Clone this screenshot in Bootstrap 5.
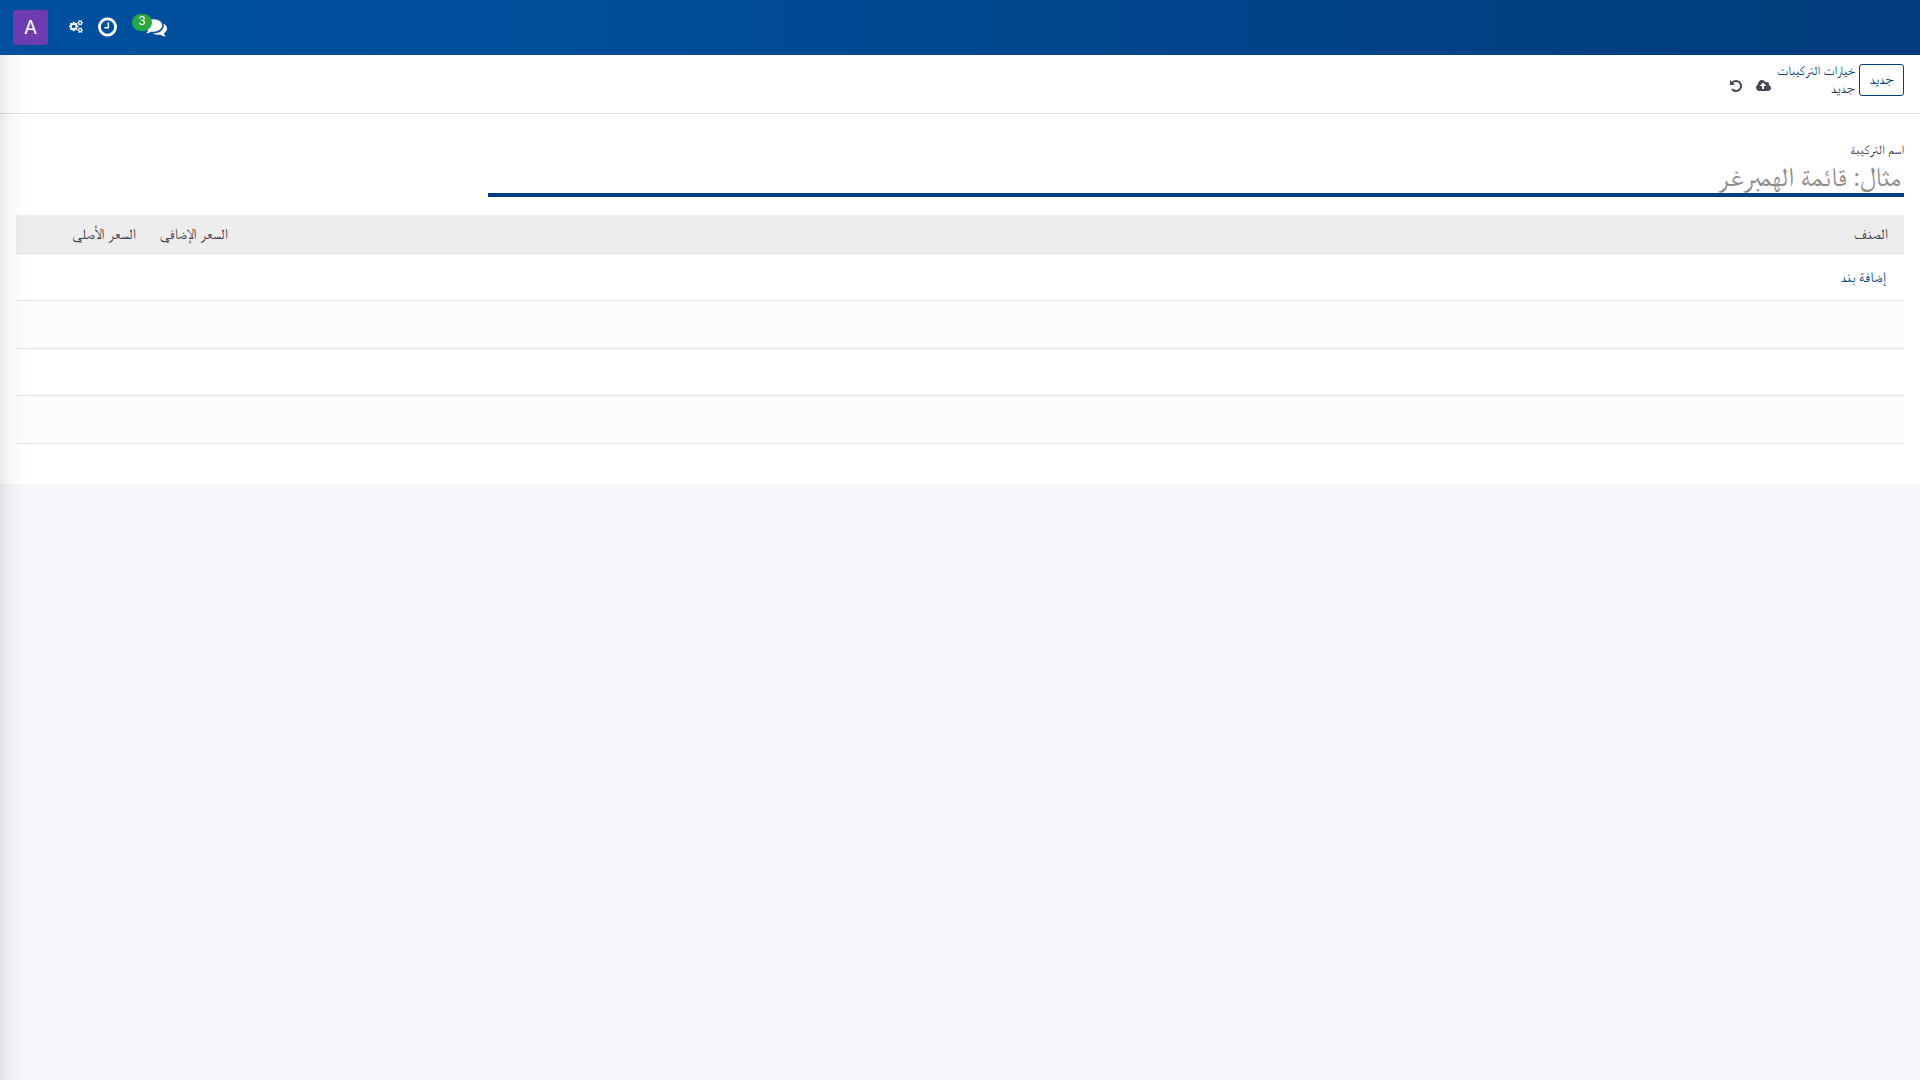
<!DOCTYPE html>
<html lang="ar" dir="rtl">
<head>
<meta charset="utf-8">
<meta name="viewport" content="width=device-width, initial-scale=1">
<title>خيارات التركيبات</title>
<link href="https://cdn.jsdelivr.net/npm/bootstrap@5.3.0/dist/css/bootstrap.min.css" rel="stylesheet">
<style>
  body { background: #f5f7fb; color: #433b4a; font-family: FreeSerif, "DejaVu Sans", sans-serif; font-size: 15px; line-height: 20px; }
  .topbar { height: 55px; padding: 0 13px; background: linear-gradient(90deg, #00509f, #004e9b 25%, #003d7a 95%); }
  .avatar-btn, .avatar-btn:hover { width: 35px; height: 35px; border-radius: 3px; background: #6f3bb0; font: 19px/36px Inter, sans-serif; }
  .count-pill { top: -2px; left: -13px; width: 20px; height: 17px; border-radius: 9px; background: #28a745; font: 12px/13px Inter, sans-serif; }
  .icon { display: block; fill: currentColor; }
  .tray { gap: 15px; padding: 0 0 2px 21px; }
  .chat-btn { margin-left: 13px; }
  .control-bar { height: 59px; padding: 9px 16px; border-bottom: 1px solid #dee2e6; }
  .brand-link, .brand-link:hover { color: #003f80; }
  .btn-new { width: 45px; height: 32px; border: 1px solid #003f80; border-radius: 3px; font-size: 15px; line-height: 20px; color: #003f80; }
  .btn-new:hover { background: #003f80; color: #fff; }
  .trail { font-size: 15px; line-height: 17px; }
  .trail-root { font-size: 13px; line-height: 16px; }
  .tool-group { gap: 13px; padding-bottom: 11px; margin-left: 8px; margin-right: 6px; }
  .tool-btn { color: #4c4452; }
  .sheet { padding: 28px 16px 40px; }
  .field-label { font-size: 13px; line-height: 18px; }
  .name-input { width: 75%; height: 37px; padding: 3px 3px 0; border: 0; border-bottom: 4px solid #003f80; border-radius: 0; font-size: 27px; line-height: 30px; outline: 0; }
  .name-input::placeholder { color: #8f8b8f; }
  .lines { margin: 18px 0 0; table-layout: fixed; }
  .lines th { background: #ededed; height: 38px; padding: 2px 16px 0; font-weight: 400; color: #433b4a; vertical-align: middle; }
  .lines td { height: 47px; padding: 2px 18px 0; vertical-align: middle; }
  .lines tbody tr:nth-child(even) td { height: 48px; background: #fcfcfc; }
  .lines tbody tr:last-child td { height: 1px; padding: 0; border: 0; }
  .lines > :not(caption) > * > * { border-bottom: 1px solid #dee2e6; box-shadow: none; }
  .price-col { width: 92px; }
  .origin-col { width: 136px; }
  .edge-shade { left: 0; top: 55px; bottom: 0; width: 27px; pointer-events: none; background: linear-gradient(90deg, rgba(0,0,0,.08), rgba(0,0,0,.02) 50%, rgba(0,0,0,0)); }
</style>
<script src="https://cdn.jsdelivr.net/npm/bootstrap@5.3.0/dist/js/bootstrap.bundle.min.js"></script>
</head>
<body>
<header class="topbar d-flex align-items-center" dir="ltr">
  <button class="avatar-btn btn p-0 border-0 text-white" type="button">A</button>
  <nav class="tray d-flex align-items-center text-white">
    <a href="#" class="text-white" aria-label="Settings"><svg class="icon" width="14" height="13" viewBox="0 0 1920 1792"><path d="M896 896q0-106-75-181t-181-75-181 75-75 181 75 181 181 75 181-75 75-181zm768 512q0-52-38-90t-90-38-90 38-38 90q0 53 37.5 90.5t90.5 37.500 90.500-37.500 37.500-90.500zm0-1024q0-52-38-90t-90-38-90 38-38 90q0 53 37.500 90.500t90.500 37.500 90.500-37.500 37.500-90.500zm-384 421v185q0 10-7 19.500t-16 10.500l-155 24q-11 35-32 76 34 48 90 115 7 11 7 20 0 12-7 19-23 30-82.500 89.500t-78.500 59.500q-11 0-21-7l-115-90q-37 19-77 31-11 108-23 155-7 24-30 24h-186q-11 0-20-7.500t-10-17.500l-23-153q-34-10-75-31l-118 89q-7 7-20 7-11 0-21-8-144-133-144-160 0-9 7-19 10-14 41-53t47-61q-23-44-35-82l-152-24q-10-1-17-9.500t-7-19.500v-185q0-10 7-19.500t16-10.500l155-24q11-35 32-76-34-48-90-115-7-11-7-20 0-12 7-20 22-30 82-89t79-59q11 0 21 7l115 90q34-18 77-32 11-108 23-154 7-24 30-24h186q11 0 20 7.500t10 17.500l23 153q34 10 75 31l118-89q8-7 20-7 11 0 21 8 144 133 144 160 0 8-7 19-12 16-42 54t-45 60q23 48 34 82l152 23q10 2 17 10.500t7 19.500zm640 533v140q0 16-149 31-12 27-30 52 51 113 51 138 0 4-4 7-122 71-124 71-8 0-46-47t-52-68q-20 2-30 2t-30-2q-14 21-52 68t-46 47q-2 0-124-71-4-3-4-7 0-25 51-138-18-25-30-52-149-15-149-31v-140q0-16 149-31 13-29 30-52-51-113-51-138 0-4 4-7 4-2 35-20t59-34 30-16q8 0 46 46.500t52 67.500q20-2 30-2t30 2q51-71 92-112l6-2q4 0 124 70 4 3 4 7 0 25-51 138 17 23 30 52 149 15 149 31zm0-1024v140q0 16-149 31-12 27-30 52 51 113 51 138 0 4-4 7-122 71-124 71-8 0-46-47t-52-68q-20 2-30 2t-30-2q-14 21-52 68t-46 47q-2 0-124-71-4-3-4-7 0-25 51-138-18-25-30-52-149-15-149-31v-140q0-16 149-31 13-29 30-52-51-113-51-138 0-4 4-7 4-2 35-20t59-34 30-16q8 0 46 46.500t52 67.500q20-2 30-2t30 2q51-71 92-112l6-2q4 0 124 70 4 3 4 7 0 25-51 138 17 23 30 52 149 15 149 31z"/></svg></a>
    <a href="#" class="text-white" aria-label="Activities"><svg class="icon" width="19" height="22" viewBox="0 0 1536 1792"><path d="M896 544v448q0 14-9 23t-23 9h-320q-14 0-23-9t-9-23v-64q0-14 9-23t23-9h224v-352q0-14 9-23t23-9h64q14 0 23 9t9 23zm416 352q0-148-73-273t-198-198-273-73-273 73-198 198-73 273 73 273 198 198 273 73 273-73 198-198 73-273zm224 0q0 209-103 385.500t-279.500 279.500-385.500 103-385.500-103-279.500-279.500-103-385.500 103-385.500 279.500-279.500 385.500-103 385.500 103 279.500 279.500 103 385.500z"/></svg></a>
    <a href="#" class="chat-btn position-relative text-white text-decoration-none" aria-label="Messages"><svg class="icon" width="22" height="22" viewBox="0 0 1792 1792"><path d="M1408 768q0 139-94 257t-256.500 186.500-353.500 68.500q-86 0-176-16-124 88-278 128-36 9-86 16h-3q-11 0-20.500-8t-11.500-21q-1-3-1-6.500t.5-6.500 2-6l2.500-5t3.500-5.500 4-5 4.500-5 4-4.500q5-6 23-25t26-29.500 22.500-29 25-38.500 20.500-44q-124-72-195-177t-71-224q0-139 94-257t256.500-186.500 353.500-68.500 353.500 68.500 256.500 186.500 94 257zm384 256q0 120-71 224.500t-195 176.500q10 24 20.500 44t25 38.500 22.500 29 26 29.500 23 25q1 1 4 4.500t4.500 5 4 5 3.500 5.500l2.500 5t2 6 .5 6.500-1 6.500q-3 14-13 22t-22 7q-50-7-86-16-154-40-278-128-90 16-176 16-271 0-472-132 58 4 88 4 161 0 309-45t264-129q125-92 192-212t67-254q0-77-23-152 129 71 204 178t75 230z"/></svg><span class="count-pill position-absolute text-center">3</span></a>
  </nav>
</header>
<main class="bg-white">
  <div class="control-bar d-flex">
    <button class="btn btn-new p-0" type="button">جديد</button>
    <div class="trail d-flex flex-column ps-0 pe-1">
      <a href="#" class="trail-root brand-link text-decoration-none">خيارات التركيبات</a>
      <span>جديد</span>
    </div>
    <div class="tool-group d-flex align-items-end">
      <button class="tool-btn btn p-0 border-0" type="button" aria-label="حفظ"><svg class="icon" width="15" height="14" viewBox="0 0 1920 1792"><path d="M1280 864q0-14-9-23l-352-352q-9-9-23-9t-23 9l-351 351q-10 12-10 24 0 14 9 23t23 9h224v352q0 13 9.500 22.500t22.500 9.500h192q13 0 22.500-9.500t9.500-22.500v-352h224q13 0 22.500-9.500t9.500-22.500zm640 288q0 159-112.500 271.500t-271.500 112.500h-1088q-185 0-316.500-131.500t-131.500-316.500q0-130 70-240t188-165q-2-30-2-43 0-212 150-362t362-150q156 0 285.500 87t188.500 231q71-62 166-62 106 0 181 75t75 181q0 76-41 138 130 31 213.500 135.500t83.500 238.500z"/></svg></button>
      <button class="tool-btn btn p-0 border-0" type="button" aria-label="تجاهل"><svg class="icon" width="14" height="14" viewBox="0 0 1792 1792"><path d="M1664 896q0 156-61 298t-164 245-245 164-298 61q-172 0-327-72.500t-264-204.500q-7-10-6.500-22.500t8.500-20.500l137-138q10-9 25-9 16 2 23 12 73 95 179 147t225 52q104 0 198.500-40.500t163.500-109.500 109.500-163.500 40.500-198.500-40.500-198.500-109.500-163.500-163.500-109.500-198.500-40.500q-98 0-188 35.500t-160 101.500l137 138q31 30 14 69-17 40-59 40h-448q-26 0-45-19t-19-45v-448q0-42 40-59 39-17 69 14l130 129q107-101 244.500-156.500t284.500-55.500q156 0 298 61t245 164 164 245 61 298z"/></svg></button>
    </div>
  </div>
  <div class="sheet">
    <label class="field-label d-block" for="combo">اسم التركيبة</label>
    <input id="combo" class="name-input d-block" type="text" placeholder="مثال: قائمة الهمبرغر">
    <table class="lines table">
      <colgroup><col><col class="price-col"><col class="origin-col"></colgroup>
      <thead><tr><th scope="col">الصنف</th><th scope="col" class="text-nowrap">السعر الإضافي</th><th scope="col" class="text-nowrap">السعر الأصلي</th></tr></thead>
      <tbody>
        <tr><td colspan="3"><a href="#" class="brand-link text-decoration-none">إضافة بند</a></td></tr>
        <tr><td colspan="3"></td></tr>
        <tr><td colspan="3"></td></tr>
        <tr><td colspan="3"></td></tr>
        <tr><td colspan="3"></td></tr>
      </tbody>
    </table>
  </div>
</main>
<div class="edge-shade position-fixed"></div>
</body>
</html>
